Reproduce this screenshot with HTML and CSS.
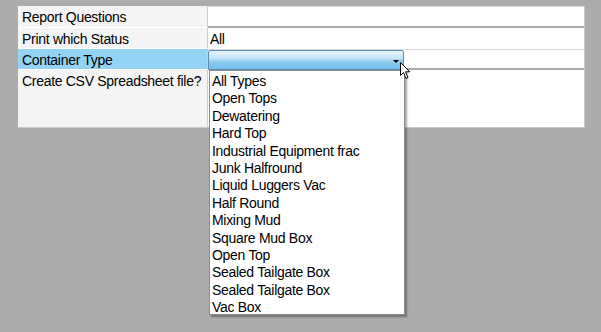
FILE: index.html
```html
<!DOCTYPE html>
<html>
<head>
<meta charset="utf-8">
<link rel="stylesheet" href="styles.css">
</head>
<body>
<div class="panel">
  <div class="label">Report Questions</div>
  <div class="value sep"></div>
  <div class="label">Print which Status</div>
  <div class="value">All</div>
  <div class="label selected">Container Type</div>
  <div class="value sep combo-cell">
    <div class="combo"><span class="arrow"></span></div>
  </div>
  <div class="label tall">Create CSV Spreadsheet file?</div>
  <div class="value"></div>
</div>
<ul class="dropdown">
  <li>All Types</li>
  <li>Open Tops</li>
  <li>Dewatering</li>
  <li>Hard Top</li>
  <li>Industrial Equipment frac</li>
  <li>Junk Halfround</li>
  <li>Liquid Luggers Vac</li>
  <li>Half Round</li>
  <li>Mixing Mud</li>
  <li>Square Mud Box</li>
  <li>Open Top</li>
  <li>Sealed Tailgate Box</li>
  <li>Sealed Tailgate Box</li>
  <li>Vac Box</li>
</ul>
<svg class="cursor" width="12" height="18" viewBox="0 0 12 18">
  <path d="M0.5 0.5 L0.5 13.5 L3.5 10.5 L6 16.5 L8 15.5 L5.5 9.8 L9.8 9.8 Z" fill="#fff" stroke="#000" stroke-width="1" stroke-linejoin="round"/>
</svg>
</body>
</html>
```
FILE: styles.css
```css
html, body {
  margin: 0;
  padding: 0;
}
body {
  width: 601px;
  height: 332px;
  background: #acacac;
  font-family: "Liberation Sans", Arial, sans-serif;
  font-size: 14px;
  letter-spacing: -0.3px;
  color: #000;
  position: relative;
  overflow: hidden;
}
.panel {
  margin: 6px 0 0 18px;
  width: 567px;
  height: 122px;
  box-sizing: border-box;
  background: #fff;
  border-right: 1px solid #c8c8c8;
  border-bottom: 1px solid #c8c8c8;
  display: grid;
  grid-template-columns: 190px 1fr;
  grid-template-rows: 22px 21px 21px 1fr;
}
.label {
  background: #f4f4f4;
  border-bottom: 1px solid #fff;
  border-right: 1px solid #cfcfcf;
  padding: 2px 0 0 4px;
  line-height: 19px;
  white-space: nowrap;
}
.label.selected {
  background: #93d4f4;
}
.label.tall {
  border-bottom: none;
}
.value {
  padding: 2px 0 0 2px;
  line-height: 19px;
}
.value.sep {
  border-bottom: 2px solid #a9a9a9;
  border-top: 1px solid #d8d8d8;
}
.combo-cell {
  padding: 0;
  border-top: none;
}
.combo {
  width: 196px;
  height: 20px;
  box-sizing: border-box;
  border: 1px solid #5b8db3;
  border-radius: 2px;
  background: linear-gradient(#e6f4fc 0%, #c4e4f7 40%, #8ccbee 60%, #74bfea 100%);
  position: relative;
}
.arrow {
  position: absolute;
  right: 4px;
  top: 9px;
  width: 0;
  height: 0;
  border-left: 3px solid transparent;
  border-right: 3px solid transparent;
  border-top: 3px solid #000;
}
.dropdown {
  position: absolute;
  left: 209px;
  top: 70px;
  width: 196px;
  height: 245px;
  box-sizing: border-box;
  margin: 0;
  padding: 2px 0 0 0;
  list-style: none;
  background: #fff;
  border: 1px solid #8c8c8c;
  box-shadow: 2px 2px 2px rgba(0, 0, 0, 0.35);
}
.dropdown li {
  height: 17.4px;
  line-height: 17.4px;
  padding-left: 2px;
  white-space: nowrap;
}
.cursor {
  position: absolute;
  left: 400px;
  top: 62px;
}
```
